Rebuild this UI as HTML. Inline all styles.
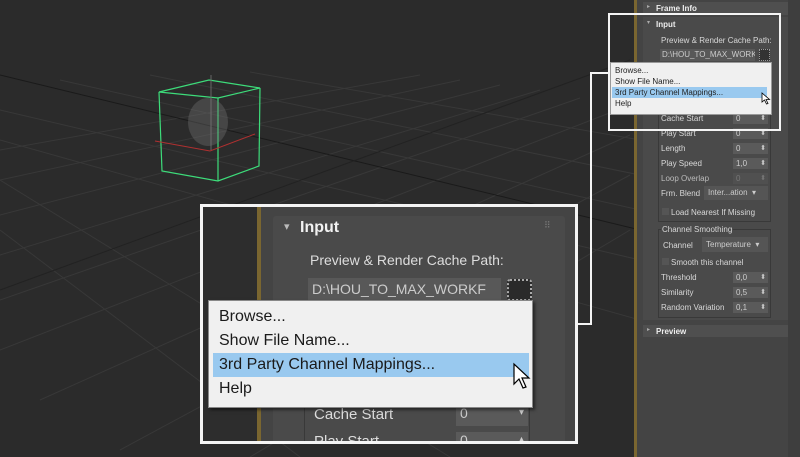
<!DOCTYPE html>
<html><head><meta charset="utf-8"><style>
*{margin:0;padding:0;box-sizing:border-box}
body{width:800px;height:457px;overflow:hidden;background:#2b2b2b;font-family:"Liberation Sans",sans-serif;position:relative}
.a{position:absolute;white-space:nowrap}
.s{font-size:8px;color:#d8d8d8}
.sp{position:absolute;background:#5a5a5a;color:#ccc;font-size:8px;padding-left:3px;line-height:11px}
.sp:after{content:"⬍";position:absolute;right:2px;top:0;font-size:7px}
</style></head><body>
<svg class="a" style="left:0;top:0" width="640" height="457">
<g stroke="#383838" stroke-width="1" fill="none">
<path d="M0 150 L420 75 M0 180 L460 80 M0 215 L500 85 M0 255 L540 90 M0 300 L580 98 M0 350 L630 105 M40 400 L630 135 M120 450 L630 175 M250 457 L630 230"/>
<path d="M0 110 L640 260 M60 80 L640 210 M0 140 L640 320 M150 75 L640 175 M0 180 L450 457 M0 230 L300 457 M250 72 L640 140"/>
</g>
<path d="M0 75 L640 230" stroke="#1a1a1a" stroke-width="1"/>
<path d="M0 290 L630 60" stroke="#222"/>
<g stroke="#3ddc7a" stroke-width="1.2" fill="none">
<path d="M159 92 L209 80 L260 88 L218 98 Z M159 92 L162 171 L218 181 L259 166 L260 88 M218 98 L218 181"/>
</g>
<path d="M155 141 L210 151 L255 134" stroke="#b03030" fill="none"/>
<line x1="211" y1="75" x2="211" y2="150" stroke="#666"/>
<ellipse cx="208" cy="122" rx="20" ry="24" fill="#777" opacity=".35"/>
</svg>
<div class="a" style="left:634px;top:0;width:3px;height:457px;background:#7a6630"></div>
<div class="a" style="left:637px;top:0;width:163px;height:457px;background:#444"></div>
<div class="a" style="left:788px;top:0;width:12px;height:457px;background:#3e3e3e"></div>
<div class="a" style="left:643px;top:2px;width:145px;height:13px;background:#4f4f4f"></div>
<div class="a" style="left:647px;top:3px;font-size:6px;color:#aaa">▸</div>
<div class="a s" style="left:656px;top:4px;font-weight:bold;color:#eee">Frame Info</div>
<div class="a" style="left:643px;top:17px;width:145px;height:303px;background:#4a4a4a"></div>
<div class="a" style="left:647px;top:19px;font-size:6px;color:#aaa">▾</div>
<div class="a s" style="left:656px;top:20px;font-weight:bold;color:#eee">Input</div>
<div class="a s" style="left:661px;top:36px">Preview &amp; Render Cache Path:</div>
<div class="a" style="left:660px;top:49px;width:95px;height:12px;background:#585858;font-size:8px;color:#ccc;padding-left:2px;line-height:12px;overflow:hidden">D:\HOU_TO_MAX_WORKF</div>
<div class="a" style="left:759px;top:49px;width:11px;height:12px;background:#333;border:1px dotted #999"></div>
<div class="a" style="left:658px;top:80px;width:113px;height:142px;border:1px solid #393939"></div>
<div class="a s" style="left:661px;top:114px">Cache Start</div><div class="sp" style="left:733px;top:113px;width:35px;height:11px">0</div>
<div class="a s" style="left:661px;top:129px">Play Start</div><div class="sp" style="left:733px;top:128px;width:35px;height:11px">0</div>
<div class="a s" style="left:661px;top:144px">Length</div><div class="sp" style="left:733px;top:143px;width:35px;height:11px">0</div>
<div class="a s" style="left:661px;top:159px">Play Speed</div><div class="sp" style="left:733px;top:158px;width:35px;height:11px">1,0</div>
<div class="a s" style="left:661px;top:174px;color:#bbb">Loop Overlap</div><div class="sp" style="left:733px;top:173px;width:35px;height:11px;background:#505050;color:#777">0</div>
<div class="a s" style="left:661px;top:189px">Frm. Blend</div><div class="a" style="left:704px;top:186px;width:64px;height:14px;background:#555;font-size:8px;color:#ccc;padding-left:4px;line-height:14px">Inter...ation &nbsp;▾</div>
<div class="a" style="left:662px;top:208px;width:7px;height:7px;background:#555"></div>
<div class="a s" style="left:671px;top:208px">Load Nearest If Missing</div>
<div class="a" style="left:658px;top:229px;width:113px;height:89px;border:1px solid #393939"></div>
<div class="a s" style="left:661px;top:225px;background:#4a4a4a;padding:0 1px">Channel Smoothing</div>
<div class="a s" style="left:663px;top:241px">Channel</div><div class="a" style="left:702px;top:237px;width:66px;height:15px;background:#555;font-size:8px;color:#ccc;padding-left:4px;line-height:15px">Temperature &nbsp;▾</div>
<div class="a" style="left:662px;top:258px;width:7px;height:7px;background:#555"></div>
<div class="a s" style="left:671px;top:258px">Smooth this channel</div>
<div class="a s" style="left:661px;top:273px">Threshold</div><div class="sp" style="left:733px;top:272px;width:35px;height:11px">0,0</div>
<div class="a s" style="left:661px;top:288px">Similarity</div><div class="sp" style="left:733px;top:287px;width:35px;height:11px">0,5</div>
<div class="a s" style="left:661px;top:303px">Random Variation</div><div class="sp" style="left:733px;top:302px;width:35px;height:11px">0,1</div>
<div class="a" style="left:643px;top:325px;width:145px;height:12px;background:#4f4f4f"></div>
<div class="a" style="left:647px;top:326px;font-size:6px;color:#aaa">▸</div>
<div class="a s" style="left:656px;top:327px;font-weight:bold;color:#eee">Preview</div>
<div class="a" style="left:608px;top:13px;width:173px;height:118px;border:2px solid #f4f4f4"></div>
<div class="a" style="left:610px;top:62px;width:162px;height:53px;background:#f0f0f0;border:1px solid #999;font-size:8px;color:#222;line-height:11px;padding:2px 0 0 4px">Browse...<br>Show File Name...<br><span style="display:block;background:#99c9ef;margin-left:-3px;padding-left:3px;width:155px">3rd Party Channel Mappings...</span>Help</div>
<svg class="a" style="left:761px;top:92px" width="10" height="14"><path d="M1 1 L1 10 L3.5 8 L5.5 12 L7 11.5 L5 7.5 L8.5 7.5 Z" fill="#fff" stroke="#000" stroke-width=".8"/></svg>
<div class="a" style="left:578px;top:323px;width:14px;height:2px;background:#f4f4f4"></div>
<div class="a" style="left:590px;top:72px;width:2px;height:253px;background:#f4f4f4"></div>
<div class="a" style="left:590px;top:72px;width:20px;height:2px;background:#f4f4f4"></div>
<div class="a" style="left:200px;top:204px;width:378px;height:240px;border:3px solid #f4f4f4;overflow:hidden;background:#444">
 <div class="a" style="left:0;top:0;width:54px;height:240px;background:#2d2d2d"></div>
 <div class="a" style="left:54px;top:0;width:4px;height:240px;background:#7a6630"></div>
 <div class="a" style="left:70px;top:9px;width:292px;height:240px;background:#4a4a4a;border-radius:3px"></div>
 <div class="a" style="left:81px;top:13px;font-size:11px;color:#bbb">▾</div>
 <div class="a" style="left:97px;top:12px;font-size:16px;font-weight:bold;color:#f2f2f2">Input</div>
 <div class="a" style="left:341px;top:13px;font-size:9px;color:#777">⠿</div>
 <div class="a" style="left:107px;top:45px;font-size:14px;color:#ddd">Preview &amp; Render Cache Path:</div>
 <div class="a" style="left:105px;top:71px;width:193px;height:23px;background:#585858;font-size:14px;color:#ccc;padding-left:4px;line-height:23px;overflow:hidden">D:\HOU_TO_MAX_WORKF</div>
 <div class="a" style="left:304px;top:72px;width:25px;height:22px;background:#2a2a2a;border:2px dotted #aaa;border-radius:3px"></div>
 <div class="a" style="left:101px;top:110px;width:226px;height:140px;border:1px solid #393939"></div>
 <div class="a" style="left:111px;top:199px;font-size:15px;color:#ddd">Cache Start</div>
 <div class="a" style="left:253px;top:198px;width:72px;height:21px;background:#5a5a5a;color:#ccc;font-size:14px;padding-left:4px">0<span style="position:absolute;right:4px;top:2px;font-size:10px">▾</span></div>
 <div class="a" style="left:111px;top:226px;font-size:15px;color:#ddd">Play Start</div>
 <div class="a" style="left:253px;top:225px;width:72px;height:21px;background:#5a5a5a;color:#ccc;font-size:14px;padding-left:4px">0<span style="position:absolute;right:4px;top:2px;font-size:10px">▴</span></div>
</div>
<div class="a" style="left:208px;top:300px;width:325px;height:108px;background:#f0f0f0;border:1px solid #888;box-shadow:2px 2px 3px rgba(0,0,0,.5);font-size:16px;color:#1a1a1a;line-height:24px;padding:4px 0 0 10px">Browse...<br>Show File Name...<br><span style="display:block;background:#99c9ef;margin-left:-6px;padding-left:6px;width:316px">3rd Party Channel Mappings...</span>Help</div>
<svg class="a" style="left:512px;top:362px" width="20" height="30"><path d="M2 2 L2 22 L7 17 L11 26 L14 25 L10 16 L17 16 Z" fill="#fff" stroke="#000" stroke-width="1.2"/></svg>
</body></html>
